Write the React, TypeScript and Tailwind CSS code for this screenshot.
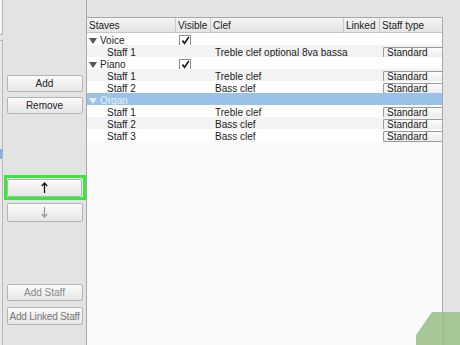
import React from "react";

type Row = {
  name: string;
  part?: boolean;
  visible?: boolean;
  clef?: string;
  selected?: boolean;
};

const rows: Row[] = [
  { name: "Voice", part: true, visible: true },
  { name: "Staff 1", clef: "Treble clef optional 8va bassa" },
  { name: "Piano", part: true, visible: true },
  { name: "Staff 1", clef: "Treble clef" },
  { name: "Staff 2", clef: "Bass clef" },
  { name: "Organ", part: true, selected: true },
  { name: "Staff 1", clef: "Treble clef" },
  { name: "Staff 2", clef: "Bass clef" },
  { name: "Staff 3", clef: "Bass clef" },
];

const cols = "grid grid-cols-[89px_35px_133px_36px_62px]";

function Btn({ children, disabled }: { children: React.ReactNode; disabled?: boolean }) {
  return (
    <div
      className={`flex h-[17px] w-[76px] items-center justify-center rounded-[2px] border border-[#b4b4b4] bg-gradient-to-b from-[#fbfbfb] to-[#e6e6e6] text-[10px] ${
        disabled ? "text-[#8a8a8a]" : "text-[#222]"
      }`}
    >
      {children}
    </div>
  );
}

function Check() {
  return (
    <div className="flex h-[12px] w-[12px] items-center justify-center border border-[#8e8e8e] bg-white">
      <svg width="9" height="9" viewBox="0 0 9 9">
        <path d="M1.5 4.5 L3.5 7.5 L7.8 1" fill="none" stroke="#111" strokeWidth="1.5" />
      </svg>
    </div>
  );
}

function Tri({ color }: { color: string }) {
  return (
    <svg width="8" height="6" viewBox="0 0 8 6" className="mr-[3px]">
      <path d="M0 0 L8 0 L4 6 Z" fill={color} />
    </svg>
  );
}

export default function App() {
  return (
    <div
      className="relative flex h-[345px] w-[460px] overflow-hidden bg-[#e3e3e3] text-[10px] text-[#222]"
      style={{ fontFamily: '"Liberation Sans", Arial, sans-serif' }}
    >
      {/* left edge of a neighbouring panel */}
      <div className="flex w-[3px] flex-col">
        <div className="h-[35px] border-r border-b border-[#b8b8b8] bg-[#f4f4f4]" />
        <div className="mt-[5px] flex-1 border-r border-t border-[#b8b8b8] bg-[#e8e8e8]">
          <div className="mt-[108px] h-[10px] bg-[#7eb0e0]" />
        </div>
      </div>

      {/* button column */}
      <div className="flex w-[84px] flex-col items-center border-r border-[#a8a8a8] pt-[75px]">
        <Btn>Add</Btn>
        <div className="mt-[5px]">
          <Btn>Remove</Btn>
        </div>
        <div className="mt-[61px] flex h-[25px] w-[82px] items-center justify-center border-[3px] border-[#3ae83a]">
          <div className="flex h-[18px] w-[75px] items-center justify-center rounded-[2px] border border-[#b4b4b4] bg-gradient-to-b from-[#fbfbfb] to-[#e6e6e6]">
            <svg width="7" height="11" viewBox="0 0 7 11">
              <path d="M3.5 1 V11 M0.8 4 L3.5 1 L6.2 4" fill="none" stroke="#111" strokeWidth="1.3" />
            </svg>
          </div>
        </div>
        <div className="mt-[3px]">
          <div className="flex h-[19px] w-[76px] items-center justify-center rounded-[2px] border border-[#b4b4b4] bg-gradient-to-b from-[#fbfbfb] to-[#e6e6e6]">
            <svg width="7" height="11" viewBox="0 0 7 11">
              <path d="M3.5 0 V10 M0.8 7 L3.5 10 L6.2 7" fill="none" stroke="#9a9a9a" strokeWidth="1.3" />
            </svg>
          </div>
        </div>
        <div className="mt-[62px]">
          <Btn disabled>Add Staff</Btn>
        </div>
        <div className="mt-[6px]">
          <div className="flex h-[18px] w-[76px] items-center justify-center rounded-[2px] border border-[#b4b4b4] bg-gradient-to-b from-[#fbfbfb] to-[#e6e6e6] text-[10px] tracking-[-0.2px] whitespace-nowrap text-[#777]">
            Add Linked Staff
          </div>
        </div>
      </div>

      {/* staves table */}
      <div className="mt-[17px] flex w-[356px] flex-col border-t border-r border-[#a8a8a8] bg-[#fafafa]">
        <div className={`${cols} h-[15px] border-b border-[#c4c4c4] bg-gradient-to-b from-[#f4f4f4] to-[#e4e4e4] text-[#222]`}>
          {["Staves", "Visible", "Clef", "Linked", "Staff type"].map((h) => (
            <div key={h} className="flex items-center border-r border-[#c8c8c8] pl-[2px] last:border-r-0">
              {h}
            </div>
          ))}
        </div>
        {rows.map((r, i) => (
          <div
            key={i}
            className={`${cols} h-[12px] ${
              r.selected ? "bg-[#99c2ea] text-[#e9f3ff]" : i % 2 ? "bg-[#f3f3f3]" : "bg-white"
            }`}
          >
            <div className={`flex items-center ${r.part ? "pl-[2px]" : "pl-[20px]"}`}>
              {r.part && <Tri color={r.selected ? "#e4efff" : "#555"} />}
              {r.name}
            </div>
            <div className="flex items-center pl-[3px]">{r.visible && <Check />}</div>
            <div className="flex items-center pl-[4px] whitespace-nowrap">{r.clef}</div>
            <div />
            <div className="flex items-center pl-[3px]">
              {r.clef && (
                <div className="flex h-[11px] flex-1 items-center rounded-l-[2px] border border-r-0 border-[#9a9a9a] bg-gradient-to-b from-[#fcfcfc] to-[#ececec] pl-[3px] leading-none">
                  Standard
                </div>
              )}
            </div>
          </div>
        ))}
        <div className="flex-1" />
      </div>

      <div className="flex-1 bg-[#e4e4e4]" />

      {/* watermark corner */}
      <svg className="absolute right-0 bottom-0" width="44" height="33" viewBox="0 0 44 33">
        <path d="M0 33 L0 23 L16 0 L44 0 L44 33 Z" fill="#a8c796" />
        <path d="M27.5 0 V33" stroke="#9cbb8a" strokeWidth="1" />
      </svg>
    </div>
  );
}
